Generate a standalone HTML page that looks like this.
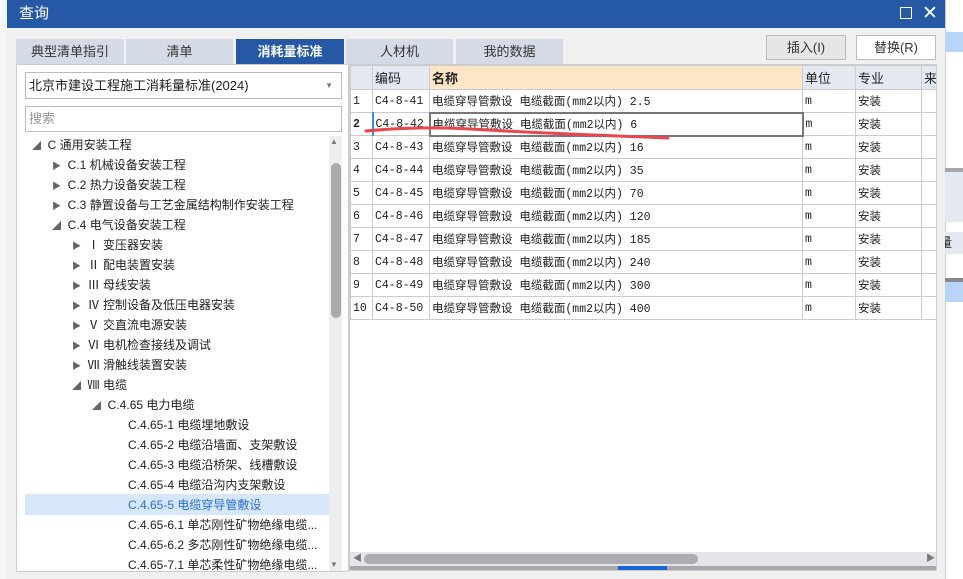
<!DOCTYPE html>
<html><head><meta charset="utf-8"><style>
*{margin:0;padding:0;box-sizing:border-box}
body{width:963px;height:579px;overflow:hidden;background:#f0f0f0;position:relative;font-family:"Liberation Sans","Noto Sans CJK SC",sans-serif;font-size:12px;color:#222}
.abs{position:absolute}
.title{left:7px;top:0;width:938px;height:28px;background:#2559a5;color:#fff;font-size:15px;line-height:28px;padding-left:12px}
.tab{top:39px;height:25px;background:#d5dbe6;text-align:center;line-height:25px;font-size:13px;color:#333}
.tab.act{background:#2559a5;color:#fff;font-weight:bold}
.btn{top:35px;height:25px;border:1px solid #bbb;text-align:center;line-height:23px;font-size:13px;color:#333;background:#fff}
.left{left:16px;top:64px;width:333px;height:508px;background:#fff;border:1px solid #ccc}
.tree div{position:absolute;height:20px;line-height:20px;font-size:12px;white-space:nowrap;color:#222}
.grid{left:349px;top:64px;width:588px;height:507px;background:#fff;border:1px solid #ccc;overflow:hidden}
table{border-collapse:collapse;table-layout:fixed;width:587px;font-family:"Liberation Mono","Noto Sans CJK SC",monospace;font-size:11.5px;position:absolute;left:0;top:0}
td{border:1px solid #ccc;height:23px;padding-left:2px;white-space:nowrap;overflow:hidden}
tr.h td{background:#e4e9f1;font-family:"Liberation Sans","Noto Sans CJK SC",sans-serif;font-size:13px;height:24px}
</style></head><body>
<div class="abs" style="left:0;top:0;width:7px;height:579px;background:#f4f6f9"></div>
<div class="abs title">查询</div>
<div class="abs" style="left:900px;top:7px;width:12px;height:12px;border:1.5px solid #fff"></div>
<div class="abs" style="left:922px;top:2px;color:#fff;font-size:19px">✕</div>
<div class="abs tab" style="left:16px;width:108px">典型清单指引</div>
<div class="abs tab" style="left:126px;width:107px">清单</div>
<div class="abs tab act" style="left:236px;width:108px">消耗量标准</div>
<div class="abs tab" style="left:346px;width:107px">人材机</div>
<div class="abs tab" style="left:456px;width:107px">我的数据</div>
<div class="abs btn" style="left:766px;width:80px;background:#e6e6e6">插入(I)</div>
<div class="abs btn" style="left:856px;width:80px">替换(R)</div>
<div class="abs left"></div>
<div class="abs" style="left:25px;top:72px;width:317px;height:27px;border:1px solid #bbb;background:#fff;line-height:25px;padding-left:3px;font-size:13px">北京市建设工程施工消耗量标准(2024)<span style="position:absolute;right:8px;top:0;font-size:8px;color:#777">▼</span></div>
<div class="abs" style="left:25px;top:106px;width:317px;height:26px;border:1px solid #bbb;background:#fff;line-height:24px;padding-left:3px;font-size:13px;color:#999">搜索</div>
<div class="abs" style="left:329px;top:136px;width:13px;height:435px;background:#eee"></div>
<div class="abs" style="left:331px;top:163px;width:10px;height:155px;background:#aaa;border-radius:5px"></div>
<div class="abs" style="left:330px;top:137px;font-size:8px;color:#777">▲</div>
<div class="abs" style="left:330px;top:560px;font-size:8px;color:#777">▼</div>
<div class="abs" style="left:25px;top:494px;width:304px;height:21px;background:#d6e6fb"></div>
<div class="tree">
<div style="left:32px;top:135px"><span style="font-size:9px;color:#666">◢</span>&nbsp; C 通用安装工程</div>
<div style="left:52px;top:155px"><span style="font-size:9px;color:#666">▶</span>&nbsp; C.1 机械设备安装工程</div>
<div style="left:52px;top:175px"><span style="font-size:9px;color:#666">▶</span>&nbsp; C.2 热力设备安装工程</div>
<div style="left:52px;top:195px"><span style="font-size:9px;color:#666">▶</span>&nbsp; C.3 静置设备与工艺金属结构制作安装工程</div>
<div style="left:52px;top:215px"><span style="font-size:9px;color:#666">◢</span>&nbsp; C.4 电气设备安装工程</div>
<div style="left:72px;top:235px"><span style="font-size:9px;color:#666">▶</span>&nbsp; Ⅰ 变压器安装</div>
<div style="left:72px;top:255px"><span style="font-size:9px;color:#666">▶</span>&nbsp; Ⅱ 配电装置安装</div>
<div style="left:72px;top:275px"><span style="font-size:9px;color:#666">▶</span>&nbsp; Ⅲ 母线安装</div>
<div style="left:72px;top:295px"><span style="font-size:9px;color:#666">▶</span>&nbsp; Ⅳ 控制设备及低压电器安装</div>
<div style="left:72px;top:315px"><span style="font-size:9px;color:#666">▶</span>&nbsp; Ⅴ 交直流电源安装</div>
<div style="left:72px;top:335px"><span style="font-size:9px;color:#666">▶</span>&nbsp; Ⅵ 电机检查接线及调试</div>
<div style="left:72px;top:355px"><span style="font-size:9px;color:#666">▶</span>&nbsp; Ⅶ 滑触线装置安装</div>
<div style="left:72px;top:375px"><span style="font-size:9px;color:#666">◢</span>&nbsp; Ⅷ 电缆</div>
<div style="left:92px;top:395px"><span style="font-size:9px;color:#666">◢</span>&nbsp; C.4.65 电力电缆</div>
<div style="left:128px;top:415px">C.4.65-1 电缆埋地敷设</div>
<div style="left:128px;top:435px">C.4.65-2 电缆沿墙面、支架敷设</div>
<div style="left:128px;top:455px">C.4.65-3 电缆沿桥架、线槽敷设</div>
<div style="left:128px;top:475px">C.4.65-4 电缆沿沟内支架敷设</div>
<div style="left:128px;top:495px;color:#2a6fdb">C.4.65-5 电缆穿导管敷设</div>
<div style="left:128px;top:515px">C.4.65-6.1 单芯刚性矿物绝缘电缆...</div>
<div style="left:128px;top:535px">C.4.65-6.2 多芯刚性矿物绝缘电缆...</div>
<div style="left:128px;top:555px;height:16px;overflow:hidden">C.4.65-7.1 单芯柔性矿物绝缘电缆...</div>
</div>
<div class="abs grid">
<table>
<colgroup><col style="width:22px"><col style="width:57px"><col style="width:373px"><col style="width:53px"><col style="width:66px"><col style="width:16px"></colgroup>
<tr class="h"><td></td><td>编码</td><td style="background:#fde5c8;font-weight:bold">名称</td><td>单位</td><td>专业</td><td>来</td></tr>
<tr><td>1</td><td>C4-8-41</td><td>电缆穿导管敷设 电缆截面(mm2以内) 2.5</td><td>m</td><td>安装</td><td></td></tr>
<tr><td style="font-weight:bold">2</td><td style="border-left:2px solid #3a8ee6">C4-8-42</td><td style="border:2px solid #777">电缆穿导管敷设 电缆截面(mm2以内) 6</td><td>m</td><td>安装</td><td></td></tr>
<tr><td>3</td><td>C4-8-43</td><td>电缆穿导管敷设 电缆截面(mm2以内) 16</td><td>m</td><td>安装</td><td></td></tr>
<tr><td>4</td><td>C4-8-44</td><td>电缆穿导管敷设 电缆截面(mm2以内) 35</td><td>m</td><td>安装</td><td></td></tr>
<tr><td>5</td><td>C4-8-45</td><td>电缆穿导管敷设 电缆截面(mm2以内) 70</td><td>m</td><td>安装</td><td></td></tr>
<tr><td>6</td><td>C4-8-46</td><td>电缆穿导管敷设 电缆截面(mm2以内) 120</td><td>m</td><td>安装</td><td></td></tr>
<tr><td>7</td><td>C4-8-47</td><td>电缆穿导管敷设 电缆截面(mm2以内) 185</td><td>m</td><td>安装</td><td></td></tr>
<tr><td>8</td><td>C4-8-48</td><td>电缆穿导管敷设 电缆截面(mm2以内) 240</td><td>m</td><td>安装</td><td></td></tr>
<tr><td>9</td><td>C4-8-49</td><td>电缆穿导管敷设 电缆截面(mm2以内) 300</td><td>m</td><td>安装</td><td></td></tr>
<tr><td>10</td><td>C4-8-50</td><td>电缆穿导管敷设 电缆截面(mm2以内) 400</td><td>m</td><td>安装</td><td></td></tr>
</table>
<div class="abs" style="left:0;top:487px;width:586px;height:14px;background:#e4e5e8"></div>
<div class="abs" style="left:14px;top:489px;width:334px;height:10px;background:#abadb2;border-radius:5px"></div>
<div class="abs" style="left:3px;top:486px;font-size:9px;color:#777">◀</div>
<div class="abs" style="left:576px;top:486px;font-size:9px;color:#777">▶</div>
<div class="abs" style="left:0;top:501px;width:586px;height:5px;background:#a6a8ad"></div>
<div class="abs" style="left:268px;top:501px;width:49px;height:5px;background:#1a64d0"></div>
</div>
<svg class="abs" style="left:0;top:0" width="963" height="579"><path d="M366 131 Q420 126 470 129 T570 134 T668 138" stroke="#e8474f" stroke-width="3" fill="none" stroke-linecap="round"/></svg>
<div class="abs" style="left:945px;top:0;width:18px;height:579px;background:#fff;border-left:1px solid #ccc"></div>
<div class="abs" style="left:945px;top:32px;width:18px;height:20px;background:#b8d4f6"></div>
<div class="abs" style="left:945px;top:168px;width:18px;height:4px;background:#a6a8ad"></div>
<div class="abs" style="left:945px;top:172px;width:18px;height:50px;background:#e4e9f1"></div>
<div class="abs" style="left:945px;top:232px;width:18px;height:22px;background:#e4e9f1;font-size:13px;line-height:22px;overflow:hidden"><span style="margin-left:-6px">量</span></div>
<div class="abs" style="left:945px;top:278px;width:18px;height:4px;background:#888"></div>
<div class="abs" style="left:945px;top:282px;width:18px;height:20px;background:#b8d4f6"></div>
</body></html>
